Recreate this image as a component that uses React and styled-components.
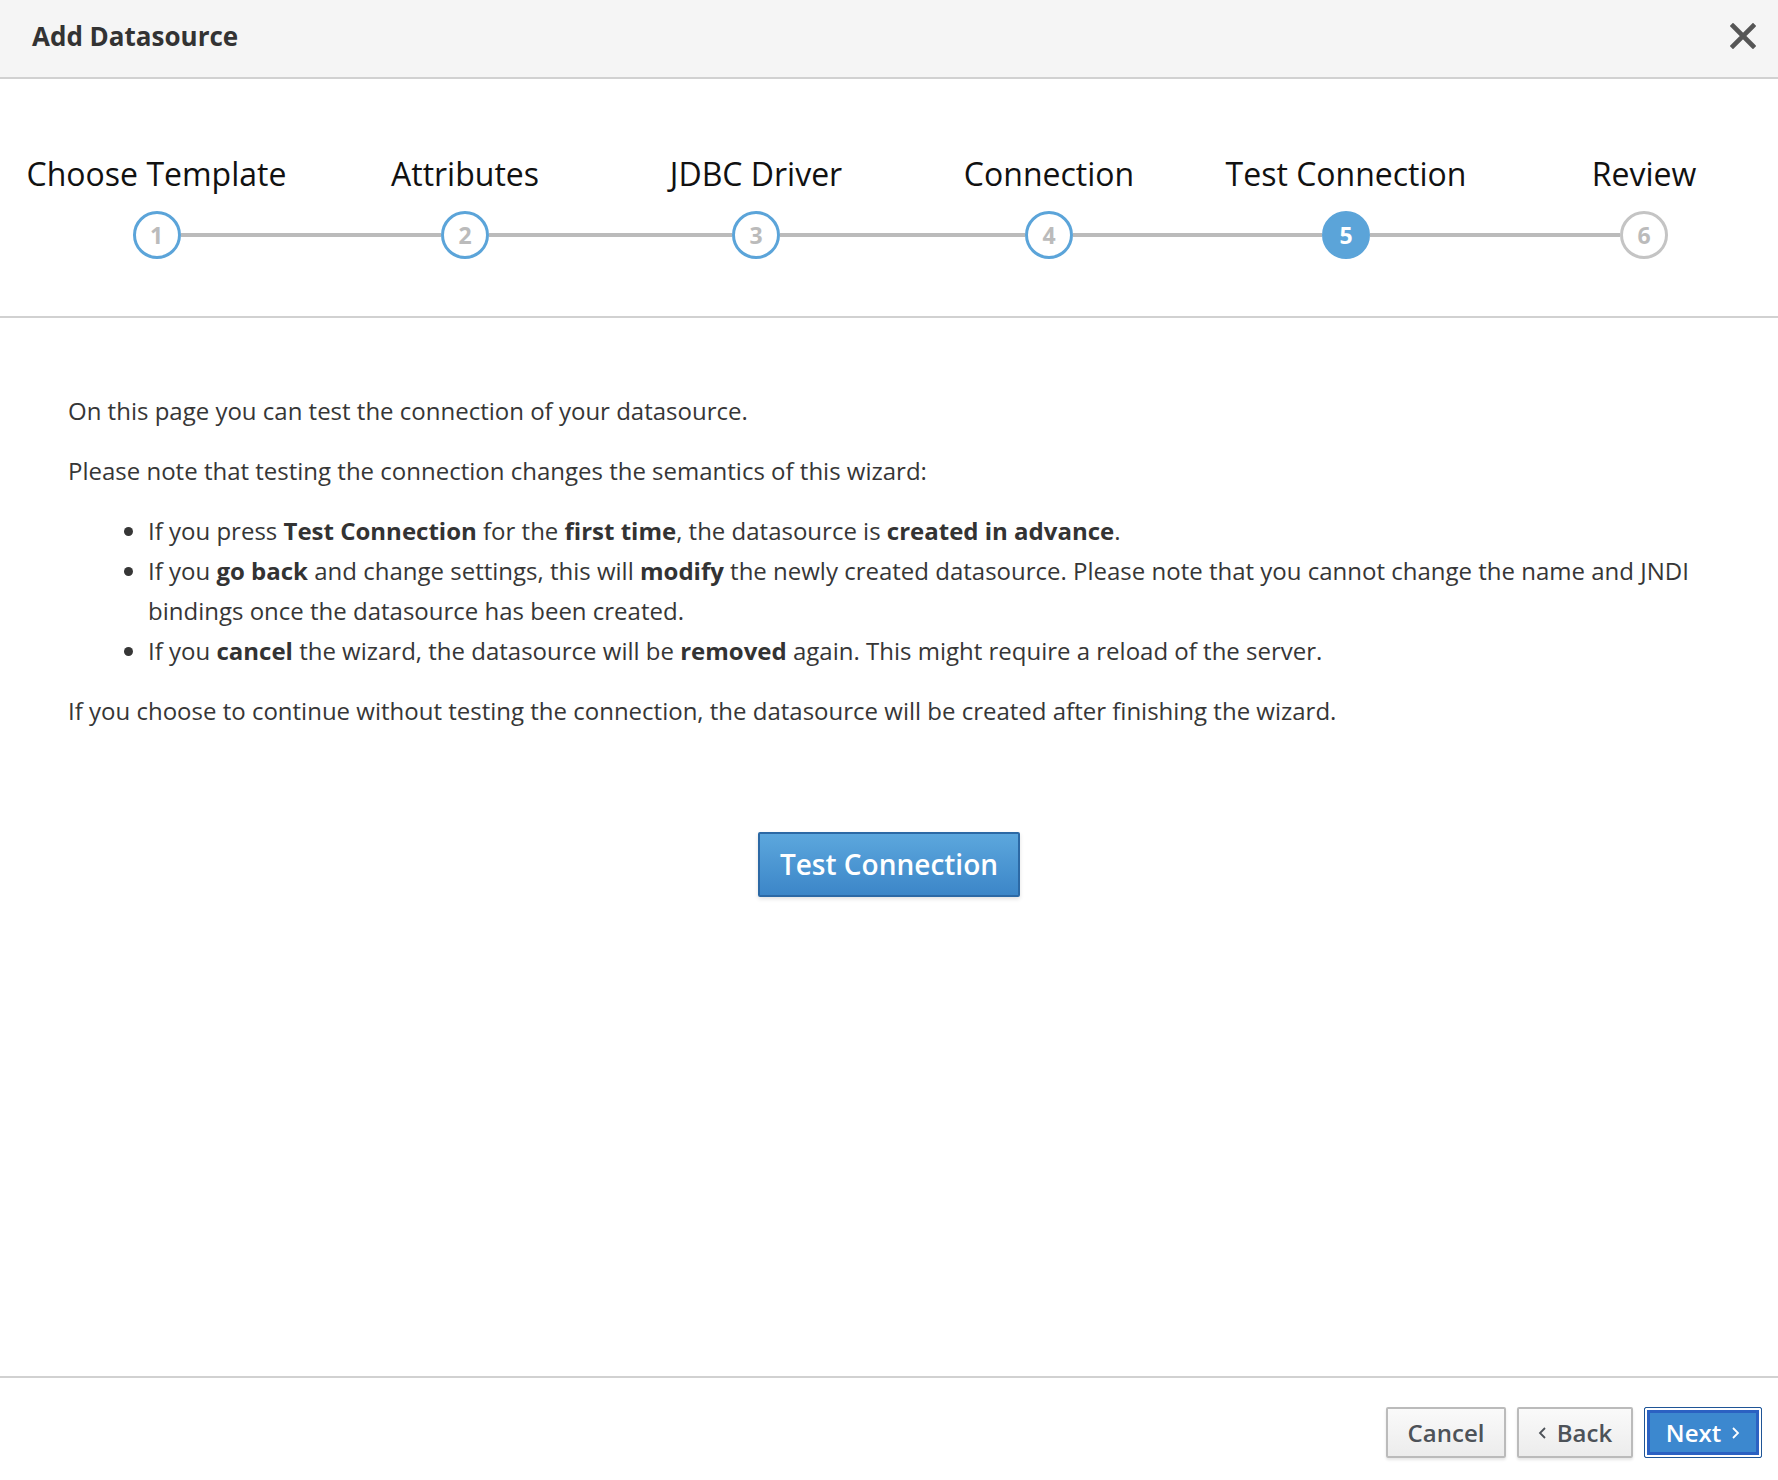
import React from 'react'
import styled, { createGlobalStyle } from 'styled-components'

const GlobalStyle = createGlobalStyle`
    html, body {
        margin: 0;
        padding: 0;
        background: #fff;
    }
    body {
        font-family: "Open Sans", "Liberation Sans", sans-serif;
        color: #363636;
    }
    * { box-sizing: border-box; }
`

const steps = [
    { label: 'Choose Template', state: 'done', gap: 260.5 },
    { label: 'Attributes', state: 'done', gap: 243 },
    { label: 'JDBC Driver', state: 'done', gap: 245 },
    { label: 'Connection', state: 'done', gap: 249 },
    { label: 'Test Connection', state: 'current', gap: 250 },
    { label: 'Review', state: 'todo' },
]

function CloseIcon() {
    return (
        <svg width="26" height="26" viewBox="0 0 26 26">
            <path d="M3 3 L23 23 M23 3 L3 23" stroke="#565656" strokeWidth="4.6" strokeLinecap="square" />
        </svg>
    )
}

function Chevron({ dir }) {
    const d = dir === 'left' ? 'M7 1 L2 6 L7 11' : 'M2 1 L7 6 L2 11'
    return (
        <svg width="9" height="12" viewBox="0 0 9 12">
            <path d={d} stroke="currentColor" strokeWidth="1.8" fill="none" />
        </svg>
    )
}

function App() {
    return (
        <>
            <GlobalStyle />
            <Dialog>
                <Header>
                    <Title>Add Datasource</Title>
                    <CloseButton aria-label="Close"><CloseIcon /></CloseButton>
                </Header>

                <Stepper>
                    {steps.map((s, i) => (
                        <React.Fragment key={s.label}>
                            <Step>
                                <StepLabel>{s.label}</StepLabel>
                                <Circle $state={s.state}>{i + 1}</Circle>
                            </Step>
                            {s.gap && <Connector style={{ flexGrow: s.gap }} />}
                        </React.Fragment>
                    ))}
                </Stepper>

                <Content>
                    <p>On this page you can test the connection of your datasource.</p>
                    <p>Please note that testing the connection changes the semantics of this wizard:</p>
                    <ul>
                        <li>If you press <b>Test Connection</b> for the <b>first time</b>, the datasource is <b>created in advance</b>.</li>
                        <li>If you <b>go back</b> and change settings, this will <b>modify</b> the newly created datasource. Please note that you cannot change the name and JNDI bindings once the datasource has been created.</li>
                        <li>If you <b>cancel</b> the wizard, the datasource will be <b>removed</b> again. This might require a reload of the server.</li>
                    </ul>
                    <p>If you choose to continue without testing the connection, the datasource will be created after finishing the wizard.</p>
                    <ActionRow>
                        <PrimaryButton>Test Connection</PrimaryButton>
                    </ActionRow>
                </Content>

                <Footer>
                    <FooterButton $width="120px">Cancel</FooterButton>
                    <FooterButton><Chevron dir="left" /> Back</FooterButton>
                    <FooterButton $primary>Next <Chevron dir="right" /></FooterButton>
                </Footer>
            </Dialog>
        </>
    )
}

const Dialog = styled.div`
    height: 100vh;
    display: flex;
    flex-direction: column;
    overflow: hidden;
`

const Header = styled.header`
    height: 79px;
    flex: none;
    background: #f5f5f5;
    border-bottom: 2px solid #d1d1d1;
    display: flex;
    align-items: center;
    justify-content: space-between;
    padding: 0 22px 5px 32px;
`

const Title = styled.h1`
    margin: 0;
    font-size: 26px;
    font-weight: 700;
    color: #333;
`

const CloseButton = styled.button`
    background: none;
    border: none;
    padding: 0;
    display: flex;
    cursor: pointer;
`

const Stepper = styled.div`
    flex: none;
    display: flex;
    align-items: flex-end;
    padding: 75px 110px 57px 132.5px;
    border-bottom: 2px solid #d1d1d1;
`

const Step = styled.div`
    width: 48px;
    flex: none;
    display: flex;
    flex-direction: column;
    align-items: center;
    gap: 17px;
`

const StepLabel = styled.div`
    font-size: 32px;
    line-height: 40px;
    color: #111;
    white-space: nowrap;
`

const Circle = styled.div`
    width: 48px;
    height: 48px;
    border-radius: 50%;
    display: flex;
    align-items: center;
    justify-content: center;
    font-size: 23px;
    font-weight: 700;
    border: 3px solid ${p => p.$state === 'todo' ? '#c4c4c4' : '#5ba4d9'};
    background: ${p => p.$state === 'current' ? '#5ba4d9' : '#fff'};
    color: ${p => p.$state === 'current' ? '#fff' : '#bbbbbb'};
`

const Connector = styled.div`
    flex-basis: 0;
    height: 4px;
    margin-bottom: 22px;
    background: #bbbbbb;
`

const Content = styled.main`
    flex: 1;
    padding: 73px 68px 0 68px;
    font-size: 24px;
    line-height: 40px;
    p {
        margin: 0 0 20px;
    }
    ul {
        margin: 0 0 20px;
        padding-left: 80px;
    }
    b {
        font-weight: 700;
        color: #333;
    }
`

const ActionRow = styled.div`
    display: flex;
    justify-content: center;
    padding-top: 81px;
`

const PrimaryButton = styled.button`
    font-family: inherit;
    font-size: 28px;
    font-weight: 600;
    line-height: 41px;
    padding: 10px 20px;
    color: #fff;
    border: 2px solid #2c69a5;
    border-radius: 2px;
    background: linear-gradient(#5ca7dd, #3c86c8);
    box-shadow: 0 2px 4px rgba(0, 0, 0, 0.12);
    cursor: pointer;
`

const Footer = styled.footer`
    flex: none;
    border-top: 2px solid #d1d1d1;
    padding: 29px 16px 22px;
    display: flex;
    justify-content: flex-end;
    gap: 11px;
`

const FooterButton = styled.button`
    font-family: inherit;
    font-size: 24px;
    font-weight: 600;
    line-height: 33px;
    height: 51px;
    padding: 0 18px;
    display: flex;
    align-items: center;
    gap: 10px;
    border-radius: 2px;
    cursor: pointer;
    color: ${p => p.$primary ? '#fff' : '#4d5258'};
    border: ${p => p.$primary ? '1px solid #1f5596' : '2px solid #bbb'};
    background: ${p => p.$primary ? '#3c88cf' : 'linear-gradient(#fafafa, #ececec)'};
    box-shadow: ${p => p.$primary
        ? 'inset 0 0 0 2px #fff, inset 0 0 0 5px #2b61c2'
        : '0 2px 3px rgba(0, 0, 0, 0.1)'};
    min-width: ${p => p.$width || (p.$primary ? '118px' : '116px')};
    justify-content: center;
`

export default App
